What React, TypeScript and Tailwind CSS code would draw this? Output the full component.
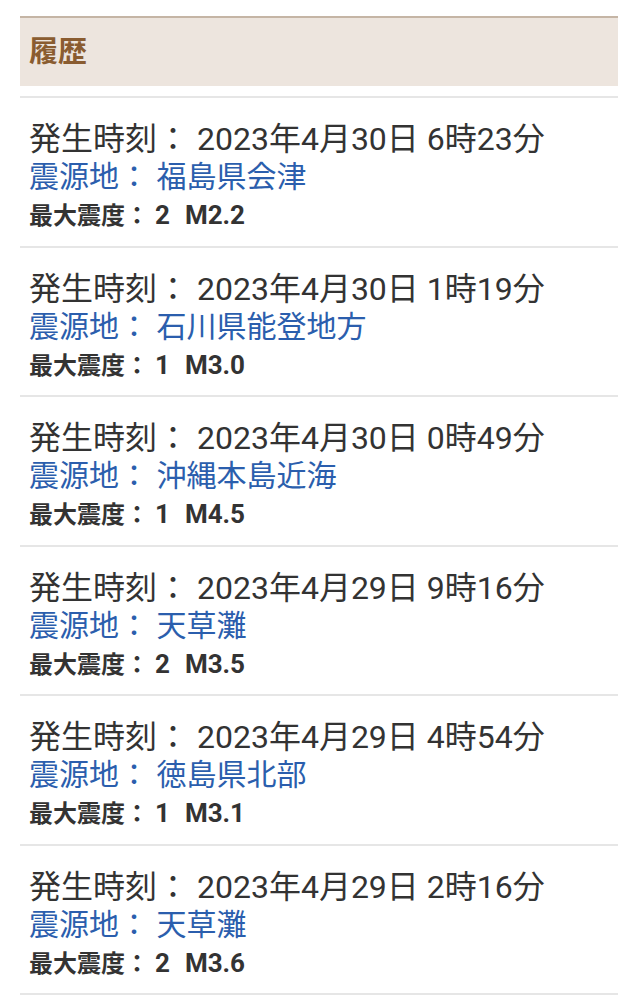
import React from 'react';

interface Quake {
  time: string;
  place: string;
  shindo: string;
  mag: string;
}

const quakes: Quake[] = [
  { time: '2023年4月30日 6時23分', place: '福島県会津', shindo: '2', mag: 'M2.2' },
  { time: '2023年4月30日 1時19分', place: '石川県能登地方', shindo: '1', mag: 'M3.0' },
  { time: '2023年4月30日 0時49分', place: '沖縄本島近海', shindo: '1', mag: 'M4.5' },
  { time: '2023年4月29日 9時16分', place: '天草灘', shindo: '2', mag: 'M3.5' },
  { time: '2023年4月29日 4時54分', place: '徳島県北部', shindo: '1', mag: 'M3.1' },
  { time: '2023年4月29日 2時16分', place: '天草灘', shindo: '2', mag: 'M3.6' },
];

const App: React.FC = () => {
  return (
    <div
      className="min-h-screen bg-white pt-[16px] pl-[20px]"
      style={{ fontFamily: 'Roboto, "Noto Sans CJK JP", sans-serif' }}
    >
      {/* 見出し */}
      <div className="flex h-[70px] items-center border-t-2 border-[#c5b5a5] bg-[#ede5de] pl-[9px]">
        <h2 className="text-[29px] font-bold leading-none text-[#8a5c30]">履歴</h2>
      </div>

      <ul className="mt-[10px] border-b-2 border-[#e6e6e6]">
        {quakes.map((q, i) => (
          <li key={i} className="border-t-2 border-[#e6e6e6] pl-[9px] pt-[22px] pb-[11.5px]">
            <div className="text-[32px] leading-[38px] text-[#333333] whitespace-nowrap">
              発生時刻： {q.time}
            </div>
            <div className="text-[30px] leading-[38px] text-[#2b5ead] whitespace-nowrap">
              震源地： {q.place}
            </div>
            <div className="h-[38px] overflow-hidden text-[24px] font-bold leading-[38px] text-[#333333] whitespace-nowrap">
              最大震度：{' '}
              <span className="text-[26px] leading-[38px]">{q.shindo}</span>
              <span className="ml-[15px] text-[26px] leading-[38px]">{q.mag}</span>
            </div>
          </li>
        ))}
      </ul>
    </div>
  );
};

export default App;
